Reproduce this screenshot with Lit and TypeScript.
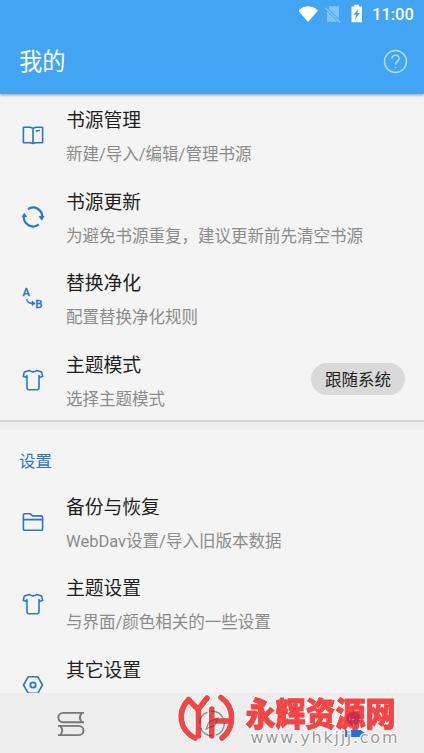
import { LitElement, html, css, svg, nothing } from "lit";
import { customElement, property } from "lit/decorators.js";

const icons: Record<string, unknown> = {
  book: svg`<path d="M2.4 4.2H9L12 5.2L15 4.2H21.6V19.7H14.5L12 20.4L9.5 19.7H2.4ZM12 5.2V20.2M14.7 8.3L18.9 7.3"/>`,
  sync: svg`<g stroke-width="2.2"><path d="M7 4.2A9 9 0 0 1 21.1 12.2M2.9 11.2A9.2 9.2 0 0 0 17.8 19.4"/></g><path fill="currentColor" stroke="none" d="M17.5 11.3L23.6 10.8L20.9 15.7ZM.5 12.3L6.3 11.7L3.1 7.7Z"/>`,
  replace: svg`<path d="M5.8 13.2C5.8 16.5 8 17.4 13 17.4M10.8 15.2L13.3 17.4L10.8 19.4" stroke-width="1.5"/><text x="1.6" y="10.2">A</text><text x="14.2" y="21.6">B</text>`,
  shirt: svg`<path d="M8.2 2.4C9.6 4.3 14.4 4.3 15.8 2.4L20.6 3.9L21.7 8.4L18.2 9.3L18 7.6V20.1Q18 21.7 16.4 21.7H7.6Q6 21.7 6 20.1V7.6L5.8 9.3L2.3 8.4L3.4 3.9Z"/>`,
  folder: svg`<path d="M2.4 18.9V5.3Q2.4 3.7 4 3.7H8.9L11.6 5.9H20.2Q21.6 5.9 21.6 7.3V18.9Q21.6 20.3 20.2 20.3H3.8Q2.4 20.3 2.4 18.9ZM2.4 9.6H21.6"/>`,
  hex: svg`<path d="M7.2 3.8H16.8L21.5 12L16.8 20.2H7.2L2.5 12Z"/><circle cx="12" cy="12" r="2.7" stroke-width="1.8"/>`,
};

@customElement("pref-row")
class PrefRow extends LitElement {
  @property() icon = "";
  @property() heading = "";
  @property() summary = "";
  @property() chip = "";

  static styles = css`
    :host { display: flex; align-items: center; height: 81.6px; box-sizing: border-box; flex: none; padding: 1px 19px 0 21px; }
    svg { width: 24px; height: 24px; flex: none; color: #2877cc; fill: none; stroke: currentColor; stroke-width: 1.6; stroke-linejoin: round; overflow: visible; }
    svg text { font: 500 11.3px Roboto, sans-serif; fill: currentColor; stroke-width: 0.3; }
    .copy { flex: 1; margin-left: 21px; padding-top: 4.4px; white-space: nowrap; }
    .heading { font-size: 18.8px; line-height: 34px; color: #1f1f1f; }
    .summary { font-size: 16.5px; line-height: 33px; min-height: 33px; color: #8b8b8b; }
    .chip { height: 32px; line-height: 36px; margin-top: -2px; box-sizing: border-box; padding: 0 14px; border-radius: 16px; background: #d9d9d9; font-size: 16.5px; color: #1f1f1f; }
  `;

  render() {
    return html`
      <svg viewBox="0 0 24 24">${icons[this.icon]}</svg>
      <div class="copy">
        <div class="heading">${this.heading}</div>
        <div class="summary">${this.summary}</div>
      </div>
      ${this.chip ? html`<div class="chip">${this.chip}</div>` : nothing}
    `;
  }
}

@customElement("app-root")
class AppRoot extends LitElement {
  static styles = css`
    :host { display: flex; flex-direction: column; position: relative; width: 424px; height: 753px; overflow: hidden; background: #f4f4f4; font-family: Roboto, "Noto Sans CJK SC", sans-serif; }
    header { flex: none; height: 94px; background: #42a4f5; color: #fff; box-shadow: 0 1px 3px rgba(0,0,0,.4); z-index: 1; }
    .status { height: 28px; display: flex; justify-content: flex-end; align-items: center; padding-right: 9px; }
    .status svg { width: 70px; height: 28px; }
    .clock { font-size: 16.5px; font-weight: 500; line-height: 28px; padding-top: 2px; margin-left: 3px; width: 43px; white-space: nowrap; }
    .bar { height: 66px; display: flex; align-items: center; justify-content: space-between; padding: 0 16px 0 19px; }
    .title { font-size: 23.3px; line-height: 66px; padding-top: 2px; }
    .help { width: 25px; height: 25px; }
    main { flex: 1; min-height: 0; overflow: hidden; display: flex; flex-direction: column; }
    .divider { flex: none; height: 9.6px; background: #eee; border-top: 2px solid #d5d5d5; box-sizing: border-box; }
    .section { flex: none; height: 50.8px; line-height: 64px; padding-left: 19px; font-size: 16.4px; color: #2877cc; }
    nav { flex: none; height: 60px; background: #ededed; display: flex; }
    .tab { flex: 1; display: flex; align-items: center; justify-content: center; }
    .tab svg { width: 28px; height: 28px; overflow: visible; }
    .mark { position: absolute; left: 170px; top: 685px; width: 240px; height: 68px; overflow: visible; }
    .logo { fill: none; stroke-linecap: round; stroke-linejoin: round; }
    .brand { font: 900 33px "Noto Sans CJK SC", sans-serif; fill: #f44444; stroke: #f44444; stroke-width: 0.9px; filter: drop-shadow(0 0 1px #fff) drop-shadow(0 0 1px #fff); }
    .url { font: 16px "DejaVu Sans", sans-serif; fill: #999; stroke: #fff; stroke-width: 2px; paint-order: stroke; }
  `;

  render() {
    const logo = "M25 53C9 45 7 27 18.5 14.5L28.5 25V51M37 13L28.5 24M41.8 24V51M41.8 36H60M51 12.5C65 22 65 43 52 53";
    return html`
      <header>
        <div class="status">
          <svg viewBox="0 0 70 28" fill="#fff">
            <path d="M-.9 10.4Q9 2 19 10.4L9 22Z"/>
            <path opacity=".35" d="M30.5 6.2H40V18.8L29.6 8.4ZM28 11.2L38.5 21.7H28Z"/>
            <path opacity=".4" d="M26.3 7.8L41 22.3" stroke="#fff" stroke-width="1.3"/>
            <path d="M52.5 6.4H55.2V4.8H60V6.4H63V22.2H52.5Z"/>
            <path d="M59.4 8.7L54.6 14.8H57.1L56 19.4L60.9 13H58.4Z" fill="#42a4f5"/>
          </svg>
          <span class="clock">11:00</span>
        </div>
        <div class="bar">
          <div class="title">我的</div>
          <svg class="help" viewBox="0 0 25 25" fill="none" stroke="#fff" stroke-opacity=".62" stroke-width="1.5">
            <circle cx="12.5" cy="12.5" r="11"/>
            <path d="M9 9.8C9 5 16.1 5 16.1 9.5C16.1 12.2 12.6 12.2 12.6 15.8M12.6 17.7V19.2"/>
          </svg>
        </div>
      </header>
      <main>
        <pref-row icon="book" heading="书源管理" summary="新建/导入/编辑/管理书源"></pref-row>
        <pref-row icon="sync" heading="书源更新" summary="为避免书源重复，建议更新前先清空书源"></pref-row>
        <pref-row icon="replace" heading="替换净化" summary="配置替换净化规则"></pref-row>
        <pref-row icon="shirt" heading="主题模式" summary="选择主题模式" chip="跟随系统"></pref-row>
        <div class="divider"></div>
        <div class="section">设置</div>
        <pref-row icon="folder" heading="备份与恢复" summary="WebDav设置/导入旧版本数据"></pref-row>
        <pref-row icon="shirt" heading="主题设置" summary="与界面/颜色相关的一些设置"></pref-row>
        <pref-row icon="hex" heading="其它设置" summary=""></pref-row>
      </main>
      <nav>
        <div class="tab">
          <svg viewBox="0 0 28 28" fill="none" stroke="#777" stroke-width="1.9">
            <path d="M27 3.9H6.2C-.2 3.9-.2 13.2 6.2 13.2H27M25 3.9Q20.8 8.5 25 13.2M1 16.9H21.5C28.2 16.9 28.2 26.1 21.5 26.1H1M3.2 16.9Q7.4 21.5 3.2 26.1"/>
          </svg>
        </div>
        <div class="tab"></div>
        <div class="tab"></div>
      </nav>
      <svg class="mark" viewBox="0 0 240 68">
        <path class="logo" d=${logo} stroke="#fff" stroke-width="8"/>
        <path class="logo" d=${logo} stroke="#f44444" stroke-width="5.6"/>
        <g fill="none" stroke="#444" stroke-opacity=".6" stroke-width="1.4">
          <circle cx="42" cy="38.5" r="12.3" stroke-dasharray="15 4"/>
          <path d="M36 44L39 37L48 33L45 40Z" stroke-width="1.2"/>
        </g>
        <text class="brand" x="75.5" y="40.5" textLength="150" lengthAdjust="spacingAndGlyphs">永辉资源网</text>
        <circle cx="183.5" cy="33.5" r="7" fill="#a01850" opacity=".5"/>
        <path fill="#1976d2" d="M174 45H191L195 48.5L190 52H174Z"/>
        <text class="url" x="80.5" y="58" textLength="147">www.yhkjjj.com</text>
      </svg>
    `;
  }
}
